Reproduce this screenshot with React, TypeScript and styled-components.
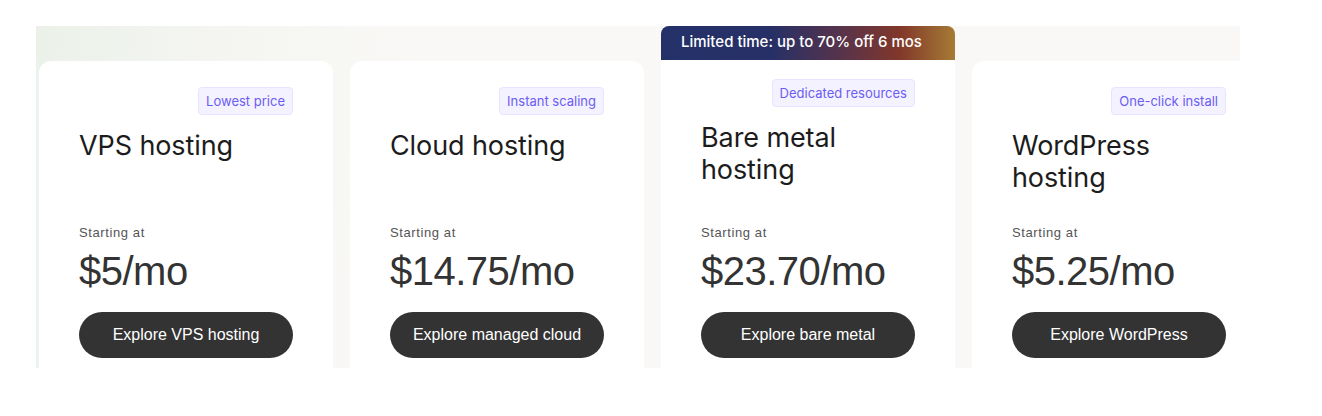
import styled, { createGlobalStyle } from "styled-components";

const GlobalStyle = createGlobalStyle`
  body {
    margin: 0;
    background: #ffffff;
    font-family: "Liberation Sans", Arial, sans-serif;
  }
`;

const SPage = styled.div`
  padding: 26px 0 0 36px;
`;

const SPanel = styled.div`
  width: 1204px;
  height: 342px;
  overflow: hidden;
  background: linear-gradient(90deg, #e7f2ee 0, #f0f4f0 3px, transparent 3px),
    linear-gradient(95deg, #ebf1e9 0%, #f4f5f1 14%, #f9f8f6 30%);
  background-size: 100% 100%, 100% 100%;
  background-position: 0 35px, 0 0;
  background-repeat: no-repeat;
  background-color: #f9f8f6;
`;

const STrack = styled.div`
  display: flex;
  align-items: flex-start;
  gap: 17px;
  padding-left: 3px;
`;

const SColumn = styled.div<{ $promo?: boolean }>`
  flex: 0 0 294px;
  display: flex;
  flex-direction: column;
  padding-top: ${(p) => (p.$promo ? 0 : 35)}px;
`;

const SBanner = styled.div`
  height: 34px;
  box-sizing: border-box;
  padding: 6px 20px 0;
  border-radius: 8px 8px 0 0;
  background: linear-gradient(
    90deg,
    #243169 0%,
    #273066 38%,
    #55334d 60%,
    #81372a 81%,
    #a67b35 100%
  );
  color: #ffffff;
  font-family: Inter, "Liberation Sans", sans-serif;
  font-size: 15px;
  font-weight: 500;
  line-height: 20px;
  white-space: nowrap;
`;

const SCard = styled.div<{ $promo?: boolean }>`
  box-sizing: border-box;
  height: ${(p) => (p.$promo ? 330 : 329)}px;
  display: flex;
  flex-direction: column;
  padding: ${(p) => (p.$promo ? 19 : 26)}px 40px 32px;
  background: #ffffff;
  border-radius: ${(p) => (p.$promo ? "0" : "12px 12px 0 0")};
`;

const SBadge = styled.span`
  align-self: flex-end;
  padding: 4px 7px;
  border: 1px solid #e8e4ff;
  border-radius: 4px;
  background: #f4f2ff;
  color: #6b5cf2;
  font-family: Inter, "Liberation Sans", sans-serif;
  font-size: 13px;
  line-height: 18px;
  white-space: nowrap;
`;

const STitle = styled.h2`
  margin: 15px 0 0;
  min-height: 64px;
  color: #1c1c1c;
  font-family: Inter, "Liberation Sans", sans-serif;
  font-size: 27px;
  font-weight: 400;
  line-height: 32px;
  letter-spacing: -0.1px;
`;

const SPriceBlock = styled.div`
  margin-top: auto;
  display: flex;
  flex-direction: column;
`;

const SStartLabel = styled.span`
  color: #555555;
  font-size: 13px;
  line-height: 18px;
  letter-spacing: 0.6px;
`;

const SPrice = styled.span`
  margin-top: 5px;
  color: #333333;
  font-size: 40px;
  line-height: 48px;
  letter-spacing: -0.5px;
`;

const SButton = styled.button`
  margin-top: 17px;
  width: 100%;
  height: 46px;
  border: none;
  border-radius: 23px;
  background: #333333;
  color: #ffffff;
  font-family: "Liberation Sans", Arial, sans-serif;
  font-size: 16px;
  cursor: pointer;
`;

type Plan = {
  id: string;
  badge: string;
  title: string;
  price: string;
  cta: string;
  promo?: string;
};

const plans: Plan[] = [
  { id: "vps", badge: "Lowest price", title: "VPS hosting", price: "$5/mo", cta: "Explore VPS hosting" },
  { id: "cloud", badge: "Instant scaling", title: "Cloud hosting", price: "$14.75/mo", cta: "Explore managed cloud" },
  {
    id: "bare",
    badge: "Dedicated resources",
    title: "Bare metal hosting",
    price: "$23.70/mo",
    cta: "Explore bare metal",
    promo: "Limited time: up to 70% off 6 mos",
  },
  { id: "wp", badge: "One-click install", title: "WordPress hosting", price: "$5.25/mo", cta: "Explore WordPress" },
];

export default function App() {
  return (
    <>
      <GlobalStyle />
      <SPage>
        <SPanel>
          <STrack>
            {plans.map((plan) => (
              <SColumn key={plan.id} $promo={!!plan.promo}>
                {plan.promo && <SBanner>{plan.promo}</SBanner>}
                <SCard $promo={!!plan.promo}>
                  <SBadge>{plan.badge}</SBadge>
                  <STitle>{plan.title}</STitle>
                  <SPriceBlock>
                    <SStartLabel>Starting at</SStartLabel>
                    <SPrice>{plan.price}</SPrice>
                    <SButton>{plan.cta}</SButton>
                  </SPriceBlock>
                </SCard>
              </SColumn>
            ))}
          </STrack>
        </SPanel>
      </SPage>
    </>
  );
}
